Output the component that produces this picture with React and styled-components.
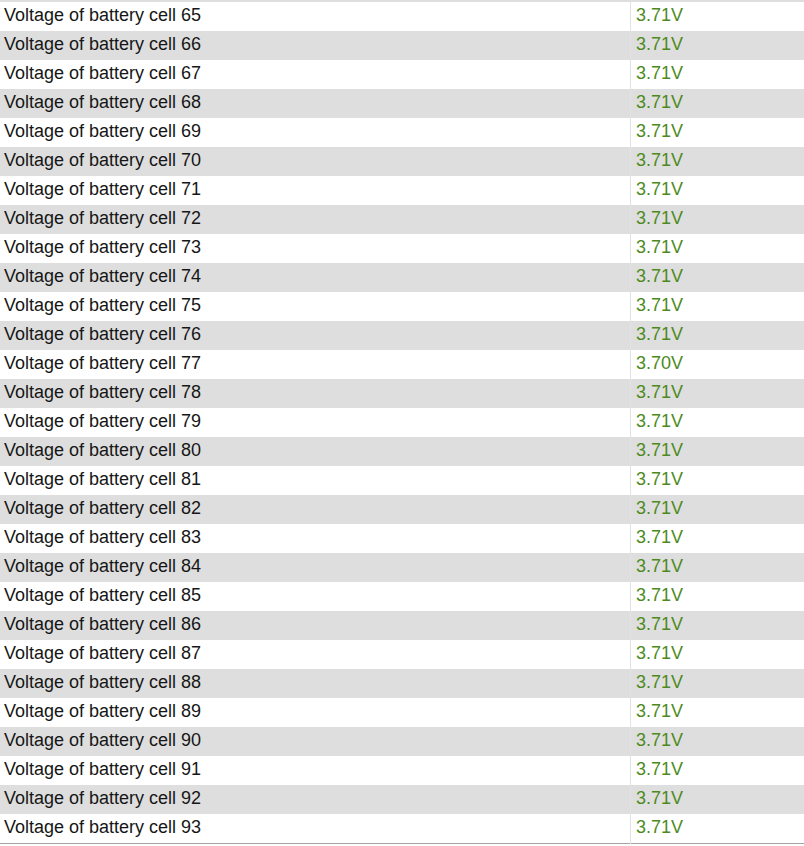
import styled, { createGlobalStyle } from "styled-components";

const cells = [];
for (let n = 65; n <= 93; n++) {
  cells.push({ id: n, value: n === 77 ? "3.70V" : "3.71V" });
}

export default function App() {
  return (
    <>
      <GlobalStyle />
      <Viewport>
        <TopEdge />
        <Table>
          <tbody>
            {cells.map((cell, i) => (
              <Row key={cell.id} $shaded={i % 2 === 1}>
                <Label>Voltage of battery cell {cell.id}</Label>
                <Value>{cell.value}</Value>
              </Row>
            ))}
          </tbody>
        </Table>
      </Viewport>
    </>
  );
}

const GlobalStyle = createGlobalStyle`
  html, body {
    margin: 0;
    padding: 0;
    background: #ffffff;
  }
  body {
    font-family: "Liberation Sans", Arial, sans-serif;
  }
`;

const Viewport = styled.div`
  width: 804px;
  height: 846px;
  overflow: hidden;
`;

const TopEdge = styled.div`
  height: 2px;
  background: #dedede;
`;

const Table = styled.table`
  width: 804px;
  border-collapse: collapse;
  border-bottom: 1px solid #a4a4a4;
  font-size: 18px;
`;

const Row = styled.tr`
  height: 29px;
  background: ${(p) => (p.$shaded ? "#dedede" : "#ffffff")};
`;

const Label = styled.td`
  width: 626px;
  padding: 0 0 3px 4px;
  color: #161616;
  border-right: 1px solid #e2e2e2;
  white-space: nowrap;
  line-height: 26px;
`;

const Value = styled.td`
  padding: 0 0 3px 5px;
  color: #4c8a1c;
  line-height: 26px;
`;
